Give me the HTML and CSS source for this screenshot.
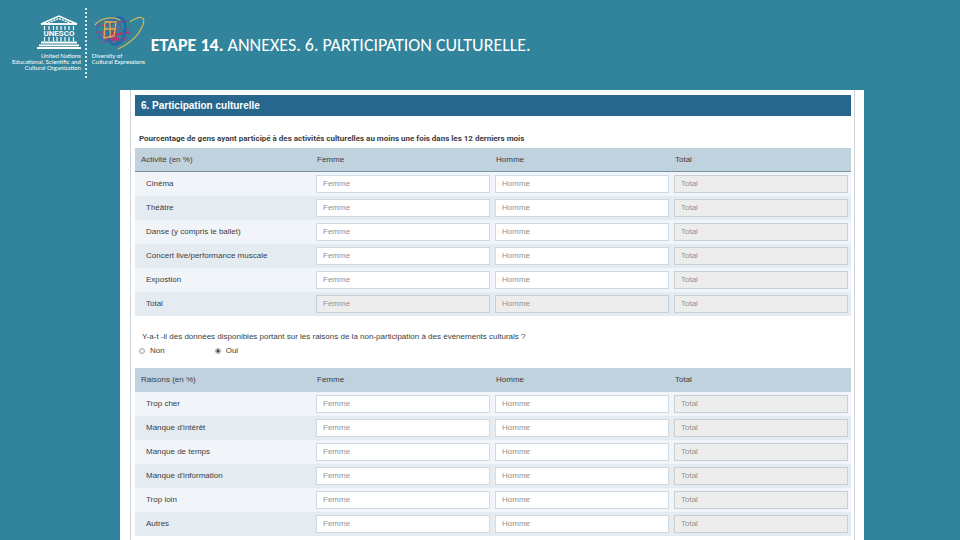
FILE: index.html
```
<!DOCTYPE html>
<html lang="fr">
<head>
<meta charset="utf-8">
<title>Etape 14. Annexes. 6. Participation culturelle.</title>
<link rel="stylesheet" href="styles.css">
</head>
<body>
<header class="banner">
  <div class="brand brand-un">
    <svg class="temple" viewBox="0 0 44 34" aria-hidden="true">
      <path d="M4 9 22 1 40 9Z" fill="none" stroke="#fff" stroke-width="1.5"/>
      <path d="M11 8 22 3.5 33 8" fill="none" stroke="#fff" stroke-width="1.4" stroke-dasharray="2 1"/>
      <path d="M4 9h36" stroke="#fff" stroke-width="1.5"/>
      <path d="M7.500 11v4M12 11v4M16.500 11v4M20 11v4M24 11v4M28 11v4M32 11v4M36.500 11v4M7.500 22v4M12 22v4M16.500 22v4M20 22v4M24 22v4M28 22v4M32 22v4M36.500 22v4" stroke="#fff" stroke-width="1.2"/>
      <path d="M4 27.500h36M2 30.300h40M0 33h44" stroke="#fff" stroke-width="1.8"/>
      <text class="temple-name" x="22" y="21" text-anchor="middle">UNESCO</text>
    </svg>
    <p class="caption">United Nations<br>Educational, Scientific and<br>Cultural Organization</p>
  </div>
  <div class="divider"></div>
  <div class="brand brand-div">
    <svg class="globe" viewBox="0 0 54 38" fill="none" aria-hidden="true">
      <path d="M5 13 35 8M4 20 38 15M6 25 40 20M10 30 36 25M11 8 30 31M20 3 14 29M25 4 19 31M5 17 27 34M31 6 15 28" stroke="#9c4380" stroke-width="1"/>
      <path d="M12 23 37 19M14 26 34 27M16 21 32 28M20 20 28 30" stroke="#c02f72" stroke-width="1.5"/>
      <ellipse cx="25" cy="18" rx="8" ry="14" stroke="#1769a8" stroke-width="2" transform="rotate(14 25 18)"/>
      <ellipse cx="18" cy="18" rx="14" ry="11" stroke="#3270a4" stroke-width="1.3" transform="rotate(28 18 18)"/>
      <path d="M13 9h11l-2 14-10 2ZM12 16h12M18 9v16" stroke="#dfae48" stroke-width="1.300"/>
      <path d="M38 9C49 1 55 4 50 14 46 24 35 32 26 36M3 12C8 5 20 3 28 7" stroke="#cbb45c" stroke-width="1.300"/>
    </svg>
    <p class="caption">Diversity of<br>Cultural Expressions</p>
  </div>
  <h1><strong>ETAPE 14.</strong> ANNEXES. 6. PARTICIPATION CULTURELLE.</h1>
</header>
<main class="sheet">
  <form class="form">
    <h2>6. Participation culturelle</h2>
    <p class="lead" id="lead">Pourcentage de gens ayant participé à des activités culturelles au moins une fois dans les 12 derniers mois</p>
    <table class="grid ruled" aria-labelledby="lead">
      <thead><tr><th scope="col">Activité (en %)</th><th scope="col">Femme</th><th scope="col">Homme</th><th scope="col">Total</th></tr></thead>
      <tbody>
        <tr><th scope="row">Cinéma</th><td><input aria-label="Cinéma, femme" placeholder="Femme"></td><td><input aria-label="Cinéma, homme" placeholder="Homme"></td><td><input aria-label="Cinéma, total" placeholder="Total" disabled></td></tr>
        <tr><th scope="row">Théâtre</th><td><input aria-label="Théâtre, femme" placeholder="Femme"></td><td><input aria-label="Théâtre, homme" placeholder="Homme"></td><td><input aria-label="Théâtre, total" placeholder="Total" disabled></td></tr>
        <tr><th scope="row">Danse (y compris le ballet)</th><td><input aria-label="Danse, femme" placeholder="Femme"></td><td><input aria-label="Danse, homme" placeholder="Homme"></td><td><input aria-label="Danse, total" placeholder="Total" disabled></td></tr>
        <tr><th scope="row">Concert live/performance muscale</th><td><input aria-label="Concert, femme" placeholder="Femme"></td><td><input aria-label="Concert, homme" placeholder="Homme"></td><td><input aria-label="Concert, total" placeholder="Total" disabled></td></tr>
        <tr><th scope="row">Expostion</th><td><input aria-label="Expostion, femme" placeholder="Femme"></td><td><input aria-label="Expostion, homme" placeholder="Homme"></td><td><input aria-label="Expostion, total" placeholder="Total" disabled></td></tr>
        <tr><th scope="row">Total</th><td><input aria-label="Total, femme" placeholder="Femme" disabled></td><td><input aria-label="Total, homme" placeholder="Homme" disabled></td><td><input aria-label="Total général" placeholder="Total" disabled></td></tr>
      </tbody>
    </table>
    <fieldset class="question">
      <legend>Y-a-t -il des données disponibles portant sur les raisons de la non-participation à des évènements culturals ?</legend>
      <div class="choices">
        <label><input type="radio" name="raisons" value="non">Non</label>
        <label><input type="radio" name="raisons" value="oui" checked>Oui</label>
      </div>
    </fieldset>
    <table class="grid">
      <thead><tr><th scope="col">Raisons (en %)</th><th scope="col">Femme</th><th scope="col">Homme</th><th scope="col">Total</th></tr></thead>
      <tbody>
        <tr><th scope="row">Trop cher</th><td><input aria-label="Trop cher, femme" placeholder="Femme"></td><td><input aria-label="Trop cher, homme" placeholder="Homme"></td><td><input aria-label="Trop cher, total" placeholder="Total" disabled></td></tr>
        <tr><th scope="row">Manque d'intérêt</th><td><input aria-label="Manque d'intérêt, femme" placeholder="Femme"></td><td><input aria-label="Manque d'intérêt, homme" placeholder="Homme"></td><td><input aria-label="Manque d'intérêt, total" placeholder="Total" disabled></td></tr>
        <tr><th scope="row">Manque de temps</th><td><input aria-label="Manque de temps, femme" placeholder="Femme"></td><td><input aria-label="Manque de temps, homme" placeholder="Homme"></td><td><input aria-label="Manque de temps, total" placeholder="Total" disabled></td></tr>
        <tr><th scope="row">Manque d'information</th><td><input aria-label="Manque d'information, femme" placeholder="Femme"></td><td><input aria-label="Manque d'information, homme" placeholder="Homme"></td><td><input aria-label="Manque d'information, total" placeholder="Total" disabled></td></tr>
        <tr><th scope="row">Trop loin</th><td><input aria-label="Trop loin, femme" placeholder="Femme"></td><td><input aria-label="Trop loin, homme" placeholder="Homme"></td><td><input aria-label="Trop loin, total" placeholder="Total" disabled></td></tr>
        <tr><th scope="row">Autres</th><td><input aria-label="Autres, femme" placeholder="Femme"></td><td><input aria-label="Autres, homme" placeholder="Homme"></td><td><input aria-label="Autres, total" placeholder="Total" disabled></td></tr>
      </tbody>
    </table>
  </form>
</main>
</body>
</html>
```
FILE: styles.css
```
* {
  box-sizing: border-box;
}

body {
  display: flex;
  flex-direction: column;
  min-height: 100vh;
  margin: 0;
  background: #31849b;
  color: #3c4043;
  font: 8px/12px "Liberation Sans", Arial, sans-serif;
}

h1,
h2,
p {
  margin: 0;
}

.banner {
  display: flex;
  align-items: flex-start;
  height: 90px;
  padding: 8px 12px;
  color: #fff;
}

.brand {
  display: flex;
  flex-direction: column;
}

.brand-un {
  align-items: flex-end;
  padding-top: 7px;
}

.temple {
  width: 44px;
  height: 34px;
  margin-bottom: 4px;
}

.temple-name {
  fill: #fff;
  font: bold 8px Roboto, sans-serif;
}

.caption {
  font: 6px/6px Lato, sans-serif;
  white-space: nowrap;
}

.brand-un .caption {
  text-align: right;
}

.divider {
  height: 70px;
  margin: 0 5px 0 4px;
  border-left: 2px dotted #d5e8ed;
}

.brand-div {
  padding-top: 5px;
}

.globe {
  width: 54px;
  height: 38px;
  margin-bottom: 2px;
}

h1 {
  padding-top: 27px;
  margin-left: 5px;
  font: 18px/20px Carlito, Lato, sans-serif;
  white-space: nowrap;
}

.sheet {
  flex: 1;
  margin: 0 10% 0 12.5%;
  padding: 0 9px 0 10px;
  background: #fff;
}

.form {
  min-height: 100%;
  padding: 5px 3px 4px 4px;
  border: solid #cdd3d9;
  border-width: 0 1px;
}

h2 {
  padding-left: 6px;
  background: #27678d;
  color: #fff;
  font-size: 10px;
  line-height: 21px;
}

.lead {
  padding: 17px 4px 3px;
  font-family: Roboto, sans-serif;
  font-weight: bold;
}

.grid {
  width: 100%;
  border-collapse: collapse;
  table-layout: fixed;
}

.grid th {
  padding: 0;
  font-weight: normal;
  text-align: left;
}

.grid td {
  padding: 0 3px 0 2px;
}

.grid th:not(:first-child) {
  width: 25%;
  padding-left: 3px;
}

.grid tr {
  height: 24px;
}

.grid thead {
  background: #c0d2de;
}

.ruled thead tr {
  height: 24px;
  box-shadow: inset 0 -1px #7693a8;
}

.grid thead th:first-child {
  padding-left: 6px;
}

.grid tbody th {
  padding-left: 11px;
}

.grid tbody tr:nth-child(odd) {
  background: #f1f5f9;
}

.grid tbody tr:nth-child(even) {
  background: #e4ebf1;
}

.grid input {
  display: block;
  width: 100%;
  height: 18px;
  margin-bottom: 1px;
  padding: 0 6px;
  border: 1px solid #cfdae2;
  border-radius: 0;
  background: #fff;
  color: #3c4043;
  font: inherit;
}

.grid input::placeholder {
  color: #929292;
  opacity: 1;
}

.grid input:disabled {
  background: #ededed;
  border-color: #c8d0d5;
}

.question {
  min-width: 0;
  margin: 0;
  padding: 15px 4px 11px;
  border: 0;
}

.question legend {
  float: left;
  width: 100%;
  padding: 0 3px;
}

.choices {
  display: flex;
  clear: both;
  gap: 50px;
  padding-top: 2px;
}

.choices label {
  display: flex;
  align-items: center;
  gap: 5px;
}

.choices input {
  width: 6px;
  height: 6px;
  margin: 0;
  border: 1px solid #a4a8aa;
  border-radius: 50%;
  background: #f2f2f2;
  appearance: none;
}

.choices input:checked {
  background: radial-gradient(circle, #444 0 1px, #ddd 2px);
}
```
